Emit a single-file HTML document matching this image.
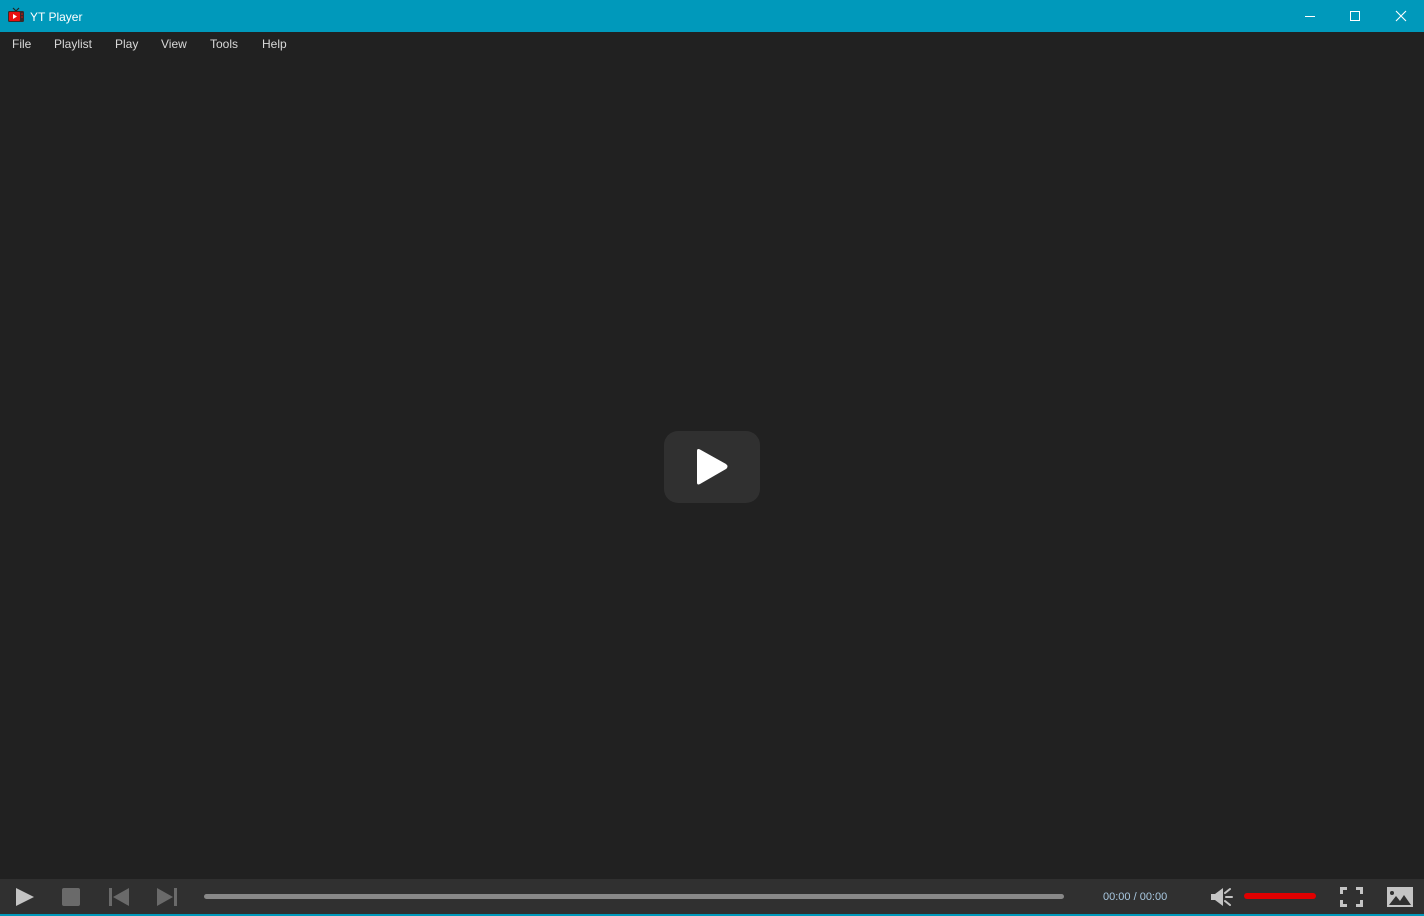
<!DOCTYPE html>
<html><head><meta charset="utf-8"><style>
*{margin:0;padding:0;box-sizing:border-box}
html,body{width:1424px;height:916px;overflow:hidden;background:#212121;font-family:"Liberation Sans","DejaVu Sans",sans-serif}
#win{position:absolute;left:0;top:0;width:1424px;height:916px;background:#212121}
#title{position:absolute;left:0;top:0;width:1424px;height:32px;background:#0099bb;color:#fff;font-size:12px}
#title .t{position:absolute;left:30px;top:10px}
#menu{position:absolute;top:37px;left:0;font-size:12px;color:#d8d8d8}
#menu span{position:absolute;top:0;white-space:nowrap}
#bar{position:absolute;left:0;top:879px;width:1424px;height:35px;background:#303030}
#bot{position:absolute;left:0;top:914px;width:1424px;height:2px;background:#0099bb}
.time{position:absolute;left:1103px;top:891px;font-size:11px;color:#a8c8e0}
</style></head><body>
<div id="win">
<div id="title">
<svg style="position:absolute;left:8px;top:7px" width="16" height="16" viewBox="0 0 16 16">
<path d="M5 1 L8 4 L11 1" stroke="#222" stroke-width="1.2" fill="none"/>
<rect x="0" y="4" width="16" height="11" rx="1.5" fill="#3a2a2a"/>
<rect x="1" y="5" width="11" height="9" rx="1" fill="#e81010"/>
<path d="M5 7 L9 9.5 L5 12Z" fill="#fff"/>
<circle cx="14" cy="7" r="0.8" fill="#e81010"/><circle cx="14" cy="10" r="0.8" fill="#e81010"/>
</svg>
<span class="t">YT Player</span>
<div style="position:absolute;left:1305px;top:16px;width:10px;height:1px;background:#fff"></div>
<div style="position:absolute;left:1350px;top:11px;width:10px;height:10px;border:1px solid #fff"></div>
<svg style="position:absolute;left:1395px;top:10px" width="12" height="12" viewBox="0 0 12 12"><path d="M1 1L11 11M11 1L1 11" stroke="#fff" stroke-width="1.1"/></svg>
</div>
<div id="menu">
<span style="left:12px">File</span><span style="left:54px">Playlist</span><span style="left:115px">Play</span><span style="left:161px">View</span><span style="left:210px">Tools</span><span style="left:262px">Help</span>
</div>
<div style="position:absolute;left:664px;top:431px;width:96px;height:72px;background:#303030;border-radius:14px"></div>
<svg style="position:absolute;left:693px;top:447px" width="38" height="40" viewBox="0 0 38 40">
<path d="M4 4 Q4 1 7 2.5 L33 17 Q36 19.5 33 22 L7 37 Q4 38.5 4 35.5Z" fill="#fff"/>
</svg>
<div id="bar">
<svg style="position:absolute;left:15px;top:8px" width="20" height="20"><path d="M1 1L19 10L1 19Z" fill="#c4c4c4"/></svg>
<div style="position:absolute;left:62px;top:9px;width:18px;height:18px;background:#6a6a6a;border-radius:2px"></div>
<svg style="position:absolute;left:108px;top:9px" width="22" height="18"><rect x="1" y="0" width="3" height="18" fill="#6a6a6a"/><path d="M21 0L5 9L21 18Z" fill="#6a6a6a"/></svg>
<svg style="position:absolute;left:156px;top:9px" width="22" height="18"><rect x="18" y="0" width="3" height="18" fill="#6a6a6a"/><path d="M1 0L17 9L1 18Z" fill="#6a6a6a"/></svg>
<div style="position:absolute;left:204px;top:15px;width:860px;height:5px;background:#888;border-radius:3px"></div>
<svg style="position:absolute;left:1208px;top:7px" width="28" height="22" viewBox="0 0 28 22">
<path d="M3 8H7L15 2V20L7 14H3Z" fill="#c4c4c4"/>
<path d="M17 7L22 3M18 11H24M17 15L22 19" stroke="#c4c4c4" stroke-width="2" stroke-linecap="round"/>
</svg>
<div style="position:absolute;left:1244px;top:14px;width:72px;height:6px;background:#e00000;border-radius:3px"></div>
<svg style="position:absolute;left:1340px;top:8px" width="23" height="20" viewBox="0 0 23 20" fill="none" stroke="#c4c4c4" stroke-width="3">
<path d="M1.5 7V1.5H7M16 1.5H21.5V7M21.5 13V18.5H16M7 18.5H1.5V13"/>
</svg>
<svg style="position:absolute;left:1387px;top:8px" width="26" height="20" viewBox="0 0 26 20">
<rect x="0" y="0" width="26" height="20" fill="#c4c4c4"/>
<circle cx="5" cy="6" r="2" fill="#303030"/>
<path d="M2 18L9 9L13 14L17 8L24 18Z" fill="#303030"/>
</svg>
</div>
<span class="time">00:00 / 00:00</span>
</div>
<div id="bot"></div>
</body></html>
